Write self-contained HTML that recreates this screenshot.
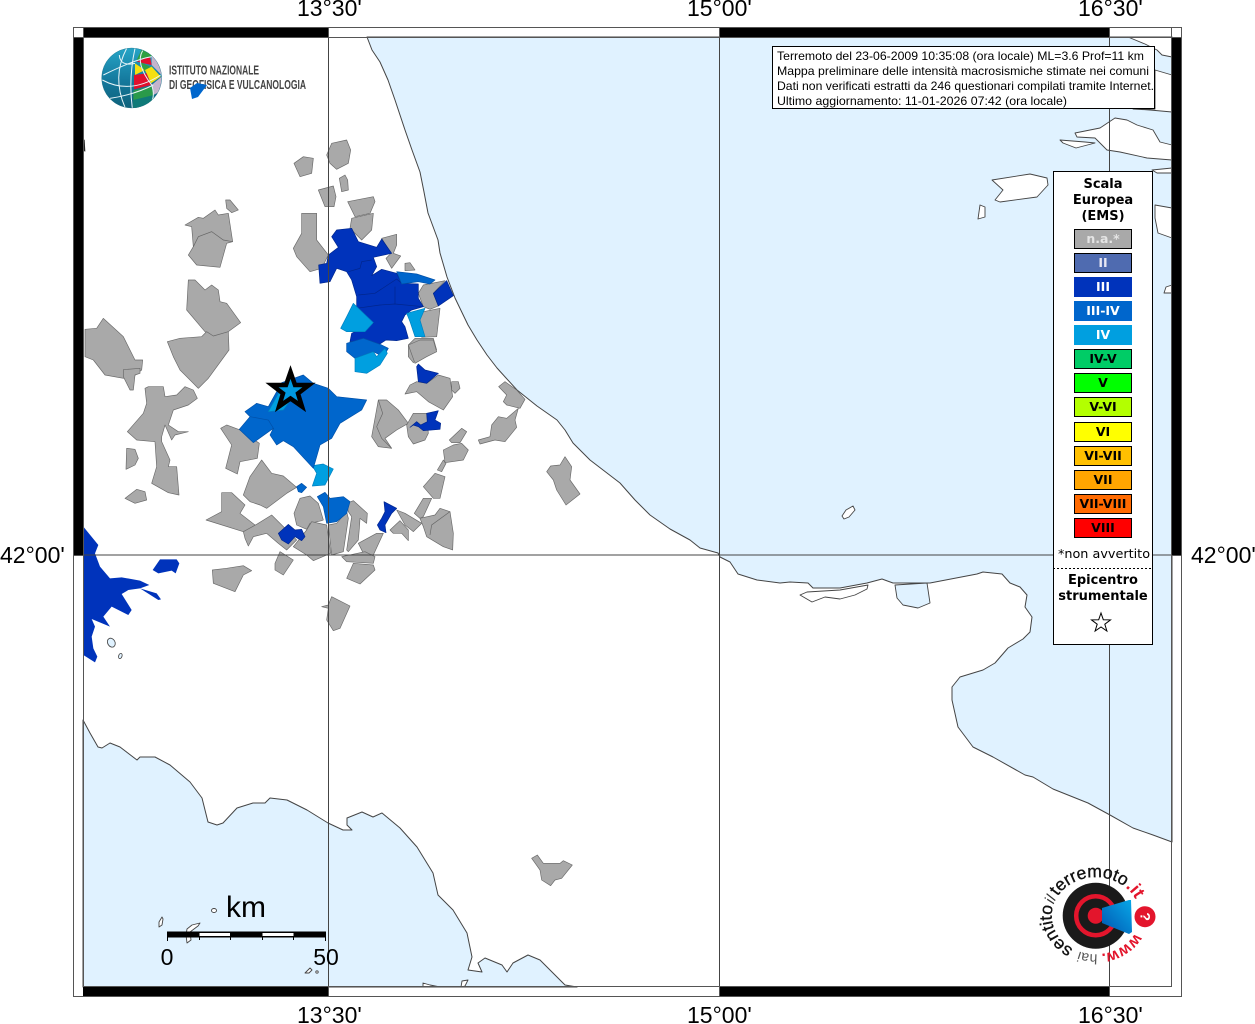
<!DOCTYPE html>
<html><head><meta charset="utf-8"><title>Terremoto</title>
<style>
html,body{margin:0;padding:0;background:#fff;width:1255px;height:1024px;overflow:hidden}
svg{position:absolute;left:0;top:0;display:block}
.g{fill:#a9a9a9;stroke:#6a6a6a;stroke-width:2;stroke-linejoin:round}
.d{fill:#0033bb;stroke:#00268c;stroke-width:2;stroke-linejoin:round}
.m{fill:#0066cc;stroke:#0050a8;stroke-width:2;stroke-linejoin:round}
.l{fill:#009fe0;stroke:#0080c0;stroke-width:2;stroke-linejoin:round}
.isl{fill:#fff;stroke:#444;stroke-width:.9;stroke-linejoin:round}
.lab{font:23px "Liberation Sans",sans-serif;fill:#000}
.box{font:12px "Liberation Sans",sans-serif;fill:#000}
.leg{font:bold 13px "DejaVu Sans",sans-serif;text-anchor:middle;fill:#000}
.lt{font:bold 12.500px "DejaVu Sans",sans-serif;text-anchor:middle}
</style></head><body>
<svg width="1255" height="1024" viewBox="0 0 1255 1024" xmlns="http://www.w3.org/2000/svg">
<rect x="0" y="0" width="1255" height="1024" fill="#fff"/>
<!-- seas -->
<polygon fill="#e0f2ff" stroke="#444" stroke-width="1" stroke-linejoin="round" points="367,37 372,50 380,62 388,80 395,100 400,115 405,130 412,150 420,172 424,192 428,213 438,240 440,253 447,277 455,298 468,325 477,340 487,355 497,368 517,390 537,406 557,420 565,430 573,443 590,460 620,483 635,500 650,515 670,529 690,540 700,548 718,553 720,557 730,562 738,574 757,580 780,583 790,582 808,583 813,588 840,588 867,583 882,579 893,583 930,583 977,574 983,572 1002,574 1010,583 1020,587 1027,595 1025,607 1032,617 1030,632 1023,639 1008,648 995,663 983,670 960,677 952,687 952,700 958,727 973,747 993,757 1025,775 1033,777 1053,789 1088,803 1110,815 1133,828 1153,835 1172,842 1172,37"/>
<polygon fill="#e0f2ff" stroke="#444" stroke-width="1" stroke-linejoin="round" points="83,720 90,733 98,747 102,748 110,743 120,747 137,760 140,757 155,757 170,765 190,782 202,798 208,822 217,825 223,823 237,808 253,803 265,803 270,798 287,800 307,810 328,823 343,830 352,830 347,825 347,818 362,812 373,817 382,813 400,828 417,847 433,873 438,895 453,910 467,933 472,957 468,970 482,972 478,963 485,958 502,965 507,972 513,963 528,955 540,960 565,985 577,987 83,987"/>
<!-- lagoons -->
<polygon class="isl" points="800,595 807,592 840,590 868,585 867,589 855,595 840,599 825,597 812,602"/>
<polygon class="isl" style="fill:#e0f2ff" points="895,585 927,583 930,603 918,608 903,605 897,598"/>
<!-- Croatian land & islands -->
<polygon class="isl" points="1128,37 1145,44 1157,50 1162,55 1172,57 1172,37"/>
<polygon class="isl" points="1155,70 1172,75 1172,112 1150,110 1133,109 1155,109"/>
<polygon class="isl" points="1075,133 1100,128 1115,118 1127,120 1137,125 1153,130 1160,142 1172,145 1172,160 1147,158 1120,152 1107,150 1095,138 1077,137"/>
<polygon class="isl" points="1060,140 1085,142 1095,143 1076,148 1063,143"/>
<polygon class="isl" points="1152,170 1172,168 1172,173 1157,173"/>
<polygon class="isl" points="992,180 1030,174 1047,178 1048,185 1037,197 1000,202 995,200 1003,190"/>
<polygon class="isl" points="980,205 985,207 985,217 978,219"/>
<polygon class="isl" points="1155,205 1172,208 1172,238 1158,233 1155,218"/>
<polygon class="isl" points="1166,287 1172,285 1172,293 1164,293"/>
<polygon class="isl" points="842,516 846,510 853,506 855,510 849,517 844,519"/>
<!-- small tyrrhenian islands -->
<polygon class="isl" points="187,929 192,925 200,923 198,926 190,932 191,940 187,943 186,935"/>
<ellipse class="isl" cx="214" cy="910.500" rx="2.500" ry="2"/>
<polygon class="isl" points="159,922 162,917 163,919 162,925 159,927"/>
<polygon class="isl" points="305,973 310,968 312,970 309,973"/>
<circle class="isl" cx="317" cy="972" r="1.200"/>
<polygon class="isl" points="423,983 430,985 440,987 423,987"/>
<polygon class="isl" points="462,981 468,980 465,986 461,987"/>
<!-- regions: coordinates from crop 1 -->
<g transform="translate(80,130) scale(.33333)">
<polygon fill="#222" points="3,20 14,30 16,65 3,60"/>
<polygon class="g" points="740,75 755,40 800,30 812,60 805,100 770,118 750,100"/>
<polygon class="g" points="642,100 670,80 700,85 695,130 660,140"/>
<polygon class="g" points="778,145 795,135 803,150 805,180 785,185"/>
<polygon class="g" points="715,180 760,168 768,200 762,230 735,230"/>
<polygon class="g" points="803,215 880,200 885,215 870,250 825,260"/>
<polygon class="g" points="815,265 880,250 875,300 845,330 810,295"/>
<polygon class="g" points="665,250 710,250 710,330 745,375 725,415 690,425 650,380 640,355 665,310"/>
<polygon class="g" points="315,285 355,262 370,265 405,240 415,255 445,250 458,335 440,340 420,412 350,405 325,375 340,350 335,290"/>
<polyline fill="none" stroke="#666" stroke-width="2" points="340,350 355,320 395,305 430,330 458,335"/>
<polygon class="g" points="437,210 450,210 475,240 455,248 440,235"/>
<polygon class="g" points="325,450 345,450 375,480 395,465 415,480 420,515 440,520 482,578 445,605 400,620 375,605 320,540"/>
<polygon class="g" points="262,635 300,625 365,620 380,605 400,618 445,605 447,660 385,745 355,775 300,720 280,680"/>
<polygon class="g" points="15,598 50,595 70,565 130,620 165,690 188,690 185,720 160,740 130,745 75,735 40,690 15,680"/>
<polygon class="g" points="905,325 950,313 950,345 940,370 962,378 935,415 918,385 933,370"/>
<polygon class="g" points="975,400 990,398 1005,420 975,422"/>
<polygon class="g" points="1015,490 1030,465 1095,452 1060,490 1075,528 1050,538 1030,530"/>
<polygon class="g" points="1030,545 1080,535 1070,620 1025,622 1015,570"/>
<polygon class="g" points="985,645 1005,625 1060,625 1070,660 1015,680 1000,698 985,680"/>
<polygon class="d" points="755,320 770,300 815,295 835,335 890,352 905,327 935,370 880,382 890,410 875,437 905,418 950,430 965,460 1015,462 1015,505 1030,530 995,540 975,555 965,575 975,590 985,625 950,632 918,630 890,648 850,630 810,635 815,610 880,580 830,535 830,500 815,450 800,425 770,415 750,455 720,460 716,405 740,400 745,375 775,352"/>
<polyline fill="none" stroke="#00268c" stroke-width="2" points="805,425 840,415 845,395 875,390"/>
<polyline fill="none" stroke="#00268c" stroke-width="2" points="835,495 885,490 950,447 965,460"/>
<polyline fill="none" stroke="#00268c" stroke-width="2" points="830,535 900,525 945,522 1030,530"/>
<polyline fill="none" stroke="#00268c" stroke-width="2" points="945,470 945,522"/>
<polygon class="m" points="950,425 1010,432 1065,450 1050,462 1015,455 965,462"/>
<polygon class="m" points="800,640 850,625 905,645 925,655 910,680 880,665 825,685 800,665"/>
<polygon class="l" points="820,520 880,578 855,605 800,605 782,595 800,560"/>
<polygon class="l" points="980,550 1035,535 1020,570 1035,620 1005,620 990,575"/>
<polygon class="l" points="825,685 880,665 890,680 915,655 922,670 900,705 860,730 825,725"/>
<polygon class="d" points="1060,490 1100,452 1120,497 1075,528"/>
</g>
<!-- regions: coordinates from crop 2 -->
<g transform="translate(80,370) scale(.33333)">
<polygon class="g" points="130,-1 180,-5 180,10 165,15 160,60 150,60 130,20"/>
<polygon class="g" points="195,55 205,50 250,50 255,80 290,75 315,50 340,60 352,85 325,105 280,120 265,165 295,185 325,185 285,195 275,210 255,165 245,200 245,215 270,270 265,290 290,290 297,375 265,368 215,340 230,290 225,215 170,210 142,185 190,130 200,100"/>
<polygon class="g" points="140,235 165,238 175,265 165,285 138,298"/>
<polygon class="g" points="135,385 170,358 195,365 200,390 165,400"/>
<polygon class="g" points="422,175 440,165 480,180 538,220 532,265 480,275 472,312 437,295 455,225"/>
<polygon class="g" points="490,375 510,320 545,270 575,310 610,318 650,352 620,370 560,415 540,405 510,395"/>
<polygon class="g" points="378,450 425,425 425,368 455,368 495,405 480,430 525,465 508,480 490,485"/>
<polygon class="g" points="490,485 530,463 575,435 610,470 650,510 620,540 595,520 560,490 520,500 505,528 495,505"/>
<polygon class="g" points="642,430 660,385 690,378 715,400 730,450 725,452 690,460 680,478 650,465"/>
<polygon class="g" points="640,530 680,480 695,455 740,465 752,550 700,572 680,555"/>
<polygon class="g" points="745,465 770,460 800,425 805,445 790,545 755,555"/>
<polygon class="g" points="800,400 820,392 862,430 860,460 840,445 838,475 835,510 805,545 800,540 815,440 805,425"/>
<polygon class="g" points="835,520 890,490 910,490 880,555 850,550"/>
<polygon class="g" points="785,560 855,545 885,560 880,580 800,575"/>
<polygon class="g" points="800,625 820,580 880,585 885,600 840,642"/>
<polygon class="g" points="585,580 600,545 640,570 610,615 585,600"/>
<polygon class="g" points="397,600 440,595 490,587 515,602 490,615 465,665 400,640"/>
<polygon class="g" points="725,710 745,705 755,680 810,708 780,775 760,782 740,750 745,715"/>
<polygon class="d" points="595,490 625,463 645,480 665,478 675,500 665,512 645,500 625,522 605,510"/>
<polygon class="m" points="650,350 665,340 680,352 665,368 655,365"/>
<polygon class="l" points="697,287 730,282 760,297 735,345 697,348 710,310"/>
<polygon class="m" points="712,380 735,367 750,385 790,380 810,395 800,430 770,455 740,460 730,410"/>
<polygon class="d" points="912,395 950,415 935,430 915,465 918,488 900,480 892,465 905,445 915,425"/>
<polygon class="g" points="930,480 960,452 985,480 985,512 965,490 940,490"/>
<polygon class="g" points="950,420 975,430 1000,445 1025,460 1000,485 975,465"/>
<polygon class="g" points="1003,430 1030,385 1055,385 1030,440 1020,445"/>
<polygon class="g" points="1030,350 1065,310 1095,320 1080,385 1060,385"/>
<polygon class="g" points="1072,300 1090,270 1098,280 1085,305"/>
<polygon class="g" points="1090,240 1120,225 1145,220 1165,240 1150,270 1095,278"/>
<polygon class="g" points="1108,210 1145,175 1160,185 1140,218 1115,218"/>
<polygon class="g" points="1020,445 1065,435 1080,415 1110,425 1120,490 1118,540 1090,530 1040,500 1030,470"/>
<polyline fill="none" stroke="#666" stroke-width="2" points="1110,425 1055,465 1050,495"/>
<polygon class="m" points="495,125 530,100 565,110 605,38 670,15 700,40 745,55 770,80 860,90 845,120 780,160 755,205 720,225 700,295 640,230 610,212 590,225 570,195 580,175 520,218 478,178 510,140"/>
<polyline fill="none" stroke="#0050a8" stroke-width="2" points="510,140 565,150 582,178"/>
<polygon class="l" points="565,125 590,80 610,40 640,80 610,120"/>
<polygon class="g" points="875,200 895,90 920,90 955,120 985,160 950,180 915,205 935,235 895,230"/>
<polyline fill="none" stroke="#666" stroke-width="2" points="895,90 908,130 890,170 905,205 935,235"/>
<polygon class="g" points="980,165 1000,130 1040,130 1045,190 1035,210 1000,222 985,200"/>
<polygon class="d" points="1040,130 1075,122 1065,150 1082,160 1080,178 1030,182 1015,170 1000,165 990,172 1010,155 1022,165 1042,155"/>
<polygon class="g" points="975,72 990,45 1010,35 1040,40 1075,15 1110,25 1118,80 1090,120 1045,95 1010,65"/>
<polygon class="d" points="1010,-10 1015,-18 1035,0 1075,10 1040,40 1015,35"/>
<polygon class="g" points="1115,35 1135,35 1140,55 1125,70 1115,60"/>
</g>
<!-- coastal gray + others -->
<g transform="translate(360,340) scale(.33333)">
<polygon class="g" points="416,140 435,125 470,150 495,178 480,205 440,195 430,185 440,165"/>
<polygon class="g" points="355,300 390,290 395,255 415,230 440,235 475,205 465,240 470,262 435,305 405,300 360,312"/>
<polygon class="g" points="560,395 572,378 600,375 615,350 635,380 630,420 660,462 618,495 590,450 580,420"/>
<polygon class="g" points="145,15 180,0 220,0 230,35 200,50 165,70"/>
</g>
<g transform="translate(80,700) scale(.33333)">
<polygon class="g" points="1355,475 1372,465 1390,490 1440,490 1450,482 1477,495 1445,535 1425,540 1412,557 1385,540 1380,510"/>
</g>
<!-- west dark blue -->
<g transform="translate(60,520) scale(.33333)">
<polygon fill="#0033bb" points="70,20 115,75 105,100 120,140 150,175 185,172 240,182 268,195 240,205 290,220 303,238 295,240 240,205 205,210 185,222 215,270 205,285 155,260 130,290 150,320 95,297 105,320 95,350 100,385 112,410 105,427 70,405"/>
<polygon fill="#0033bb" points="278,150 300,118 350,118 358,130 347,160 335,152 295,160"/>
<ellipse cx="154" cy="368" rx="11" ry="14" transform="rotate(-30 154 368)" fill="#e0f2ff" stroke="#444" stroke-width="2.500"/>
<ellipse cx="181" cy="408" rx="5" ry="8" transform="rotate(20 181 408)" fill="#e0f2ff" stroke="#444" stroke-width="2.500"/>
</g>
<!-- grid -->
<g stroke="#444" stroke-width="1" fill="none">
<line x1="328.500" y1="37" x2="328.500" y2="987"/>
<line x1="719.500" y1="37" x2="719.500" y2="987"/>
<line x1="1109.500" y1="37" x2="1109.500" y2="987"/>
<line x1="83" y1="555" x2="1172" y2="555"/>
</g>
<!-- frame -->
<rect x="83" y="27" width="245" height="10" fill="#000"/>
<rect x="719" y="27" width="390" height="10" fill="#000"/>
<rect x="83" y="987" width="245" height="10" fill="#000"/>
<rect x="719" y="987" width="390" height="10" fill="#000"/>
<rect x="73" y="37" width="10" height="518" fill="#000"/>
<rect x="1172" y="37" width="10" height="518" fill="#000"/>
<g fill="none" stroke="#555" stroke-width="1">
<rect x="73.500" y="27.500" width="1108" height="969"/>
<rect x="83.500" y="37.500" width="1088" height="949"/>
<line x1="83.500" y1="27" x2="83.500" y2="37"/>
<line x1="1171.500" y1="27" x2="1171.500" y2="37"/>
<line x1="73" y1="37.500" x2="83" y2="37.500"/>
<line x1="1172" y1="37.500" x2="1182" y2="37.500"/>
<line x1="328.500" y1="27" x2="328.500" y2="37"/>
<line x1="719.500" y1="27" x2="719.500" y2="37"/>
<line x1="1109.500" y1="27" x2="1109.500" y2="37"/>
<line x1="328.500" y1="987" x2="328.500" y2="997"/>
<line x1="719.500" y1="987" x2="719.500" y2="997"/>
<line x1="1109.500" y1="987" x2="1109.500" y2="997"/>
<line x1="73" y1="555.500" x2="83" y2="555.500"/>
<line x1="1172" y1="555.500" x2="1182" y2="555.500"/>
</g>
<!-- axis labels -->
<g class="lab">
<text x="297" y="16">13°30'</text>
<text x="687" y="16">15°00'</text>
<text x="1078" y="16">16°30'</text>
<text x="297" y="1023">13°30'</text>
<text x="687" y="1023">15°00'</text>
<text x="1078" y="1023">16°30'</text>
<text x="0" y="563">42°00'</text>
<text x="1191" y="563">42°00'</text>
</g>
<!-- INGV logo -->
<defs>
<clipPath id="gl"><circle cx="185" cy="174" r="90"/></clipPath>
<linearGradient id="gb" x1="0" y1="0" x2="0" y2="1"><stop offset="0" stop-color="#27a6c8"/><stop offset=".55" stop-color="#14789c"/><stop offset="1" stop-color="#0e6078"/></linearGradient>
<linearGradient id="cone" x1="0" y1="1" x2="1" y2="0"><stop offset="0" stop-color="#0055b0"/><stop offset="1" stop-color="#08a8e8"/></linearGradient>
</defs>
<g transform="translate(70,20) scale(.33333)">
<g clip-path="url(#gl)">
<rect x="90" y="80" width="190" height="190" fill="url(#gb)"/>
<polygon fill="#2fa040" points="200,120 215,88 250,105 235,115"/>
<polygon fill="#e0102e" points="200,125 240,110 245,135 222,130"/>
<polygon fill="#c4b4cc" points="245,105 280,145 280,170 245,135"/>
<polygon fill="#f5e010" points="195,130 225,150 195,165"/>
<polygon fill="#2fa040" points="208,125 240,140 225,155"/>
<polygon fill="#f5e010" points="225,150 245,140 272,170 243,190"/>
<polygon fill="#e0102e" points="192,165 230,160 243,195 192,208"/>
<polygon fill="#c4b4cc" points="245,195 275,170 270,215 250,225"/>
<polygon fill="#2a9a4a" points="190,212 245,198 252,240 190,268"/>
<polygon fill="#0f7a78" points="190,240 252,225 252,250 190,268"/>
<g fill="none" stroke="#e8f4f8" stroke-width="3">
<path d="M195,85 Q175,175 187,265"/>
<path d="M170,85 Q125,170 165,262"/>
<path d="M218,92 Q195,130 245,195 Q255,225 245,245"/>
<path d="M100,165 Q190,120 245,110"/>
<path d="M97,180 Q180,225 272,165"/>
<path d="M120,235 Q190,225 250,195"/>
<path d="M148,105 Q150,140 195,130"/>
</g>
</g>
<circle cx="185" cy="174" r="90" fill="none" stroke="#1a6a80" stroke-width="1"/>
</g>
<g font-family="'Liberation Sans',sans-serif" font-size="13" font-weight="bold" fill="#444">
<text x="169" y="74.500" textLength="90" lengthAdjust="spacingAndGlyphs">ISTITUTO NAZIONALE</text>
<text x="169" y="89" textLength="137" lengthAdjust="spacingAndGlyphs">DI GEOFISICA E VULCANOLOGIA</text>
</g>
<polygon fill="#0066cc" points="190,88 197,83 207,85 198,97 192,99"/>
<!-- info box -->
<rect x="772.500" y="46.500" width="382" height="62" fill="#fff" stroke="#000" stroke-width="1"/>
<g class="box">
<text x="777" y="60" textLength="367" lengthAdjust="spacingAndGlyphs">Terremoto del 23-06-2009 10:35:08 (ora locale) ML=3.6 Prof=11 km</text>
<text x="777" y="75" textLength="372" lengthAdjust="spacingAndGlyphs">Mappa preliminare delle intensità macrosismiche stimate nei comuni</text>
<text x="777" y="90" textLength="377" lengthAdjust="spacingAndGlyphs">Dati non verificati estratti da 246 questionari compilati tramite Internet.</text>
<text x="777" y="105" textLength="290" lengthAdjust="spacingAndGlyphs">Ultimo aggiornamento: 11-01-2026 07:42 (ora locale)</text>
</g>
<!-- legend -->
<rect x="1053.500" y="171.500" width="99" height="473" fill="#fff" stroke="#000" stroke-width="1"/>
<text class="leg" x="1103" y="188">Scala</text>
<text class="leg" x="1103" y="204">Europea</text>
<text class="leg" x="1103" y="220">(EMS)</text>
<g stroke-width="1">
<rect x="1074.500" y="229.500" width="57" height="19" fill="#a9a9a9" stroke="#000"/>
<rect x="1074.500" y="253.500" width="57" height="19" fill="#4f6bb0" stroke="#000"/>
<rect x="1074.500" y="277.500" width="57" height="19" fill="#0033bb" stroke="#0033bb"/>
<rect x="1074.500" y="301.500" width="57" height="19" fill="#0066cc" stroke="#0066cc"/>
<rect x="1074.500" y="325.500" width="57" height="19" fill="#009fe0" stroke="#009fe0"/>
<rect x="1074.500" y="349.500" width="57" height="19" fill="#00cc66" stroke="#000"/>
<rect x="1074.500" y="373.500" width="57" height="19" fill="#00ff00" stroke="#000"/>
<rect x="1074.500" y="397.500" width="57" height="19" fill="#b3ff00" stroke="#000"/>
<rect x="1074.500" y="422.500" width="57" height="19" fill="#ffff00" stroke="#000"/>
<rect x="1074.500" y="446.500" width="57" height="19" fill="#ffc000" stroke="#000"/>
<rect x="1074.500" y="470.500" width="57" height="19" fill="#ffa500" stroke="#000"/>
<rect x="1074.500" y="494.500" width="57" height="19" fill="#ff6a00" stroke="#000"/>
<rect x="1074.500" y="518.500" width="57" height="19" fill="#ff0000" stroke="#000"/>
</g>
<g class="lt">
<text x="1103" y="243" fill="#e4e4e4">n.a.*</text>
<text x="1103" y="267" fill="#e8e8f4">II</text>
<text x="1103" y="291" fill="#fff">III</text>
<text x="1103" y="315" fill="#fff">III-IV</text>
<text x="1103" y="339" fill="#fff">IV</text>
<text x="1103" y="363" fill="#000">IV-V</text>
<text x="1103" y="387" fill="#000">V</text>
<text x="1103" y="411" fill="#000">V-VI</text>
<text x="1103" y="436" fill="#000">VI</text>
<text x="1103" y="460" fill="#000">VI-VII</text>
<text x="1103" y="484" fill="#000">VII</text>
<text x="1103" y="508" fill="#000">VII-VIII</text>
<text x="1103" y="532" fill="#000">VIII</text>
</g>
<text x="1104" y="558" text-anchor="middle" font-family="'DejaVu Sans',sans-serif" font-size="12.800" fill="#000">*non avvertito</text>
<line x1="1053" y1="568.500" x2="1153" y2="568.500" stroke="#000" stroke-width="1" stroke-dasharray="2 2"/>
<text class="leg" x="1103" y="584">Epicentro</text>
<text class="leg" x="1103" y="600">strumentale</text>
<polygon fill="#fff" stroke="#000" stroke-width="1" points="1101,613 1103.300,619.700 1110.500,619.900 1104.800,624.200 1106.900,631 1101,627 1095.100,631 1097.200,624.200 1091.500,619.900 1098.700,619.700"/>
<!-- epicentre star -->
<polygon fill="#0099e0" stroke="#000" stroke-width="4.500" stroke-miterlimit="10" points="290.500,372 295,385 309,385 298,393.500 302,406.500 290.500,398.500 279,406.500 283,393.500 272,385 286,385"/>
<!-- scale bar -->
<g>
<rect x="167" y="931.500" width="159" height="6" fill="#000"/>
<rect x="199.500" y="933" width="30.500" height="3" fill="#fff"/>
<rect x="262.500" y="933" width="31" height="3" fill="#fff"/>
<g stroke="#000" stroke-width="1">
<line x1="167.500" y1="937" x2="167.500" y2="941"/>
<line x1="199.500" y1="937" x2="199.500" y2="940"/>
<line x1="230.500" y1="937" x2="230.500" y2="940"/>
<line x1="262.500" y1="937" x2="262.500" y2="940"/>
<line x1="293.500" y1="937" x2="293.500" y2="940"/>
<line x1="325.500" y1="937" x2="325.500" y2="941"/>
</g>
</g>
<g font-family="'Liberation Sans',sans-serif" fill="#000">
<text x="226" y="917" font-size="30">km</text>
<text x="167" y="965" font-size="23" text-anchor="middle">0</text>
<text x="326" y="965" font-size="23" text-anchor="middle">50</text>
</g>
<!-- hai sentito logo -->
<circle cx="1095.700" cy="915.700" r="33" fill="#1a1a1a"/>
<circle cx="1095.700" cy="915.700" r="19.500" fill="none" stroke="#e3152c" stroke-width="4.500"/>
<circle cx="1095.700" cy="915.700" r="8" fill="#e3152c"/>
<polygon fill="url(#cone)" points="1102,908 1129,900 1131,900 1132,932 1129,934 1102,923"/>
<circle cx="1145" cy="916.700" r="10.500" fill="#e3152c"/>
<text x="1145" y="921" text-anchor="middle" font-family="'Liberation Sans',sans-serif" font-weight="bold" font-size="14" fill="#fff" transform="rotate(90 1145 916.700)">?</text>
<defs><path id="rg" d="M1139.700,915.700 A44,38.500 0 1 1 1051.700,915.700 A44,38.500 0 1 1 1139.700,915.700"/></defs>
<g font-family="'Liberation Sans',sans-serif" font-size="17.500" stroke-width=".35">
<text fill="#e3152c" font-weight="bold" font-size="16"><textPath href="#rg" startOffset="18">www.</textPath></text>
<text fill="#555" font-size="14"><textPath href="#rg" startOffset="63">hai</textPath></text>
<text fill="#111" stroke="#111"><textPath href="#rg" startOffset="88">sentito</textPath></text>
<text fill="#333" font-style="italic" font-size="15"><textPath href="#rg" startOffset="141">il</textPath></text>
<text fill="#111" stroke="#111"><textPath href="#rg" startOffset="150">terremoto</textPath></text>
<text fill="#e3152c" font-weight="bold" font-size="18"><textPath href="#rg" startOffset="226">.it</textPath></text>
</g>
</svg>
</body></html>
